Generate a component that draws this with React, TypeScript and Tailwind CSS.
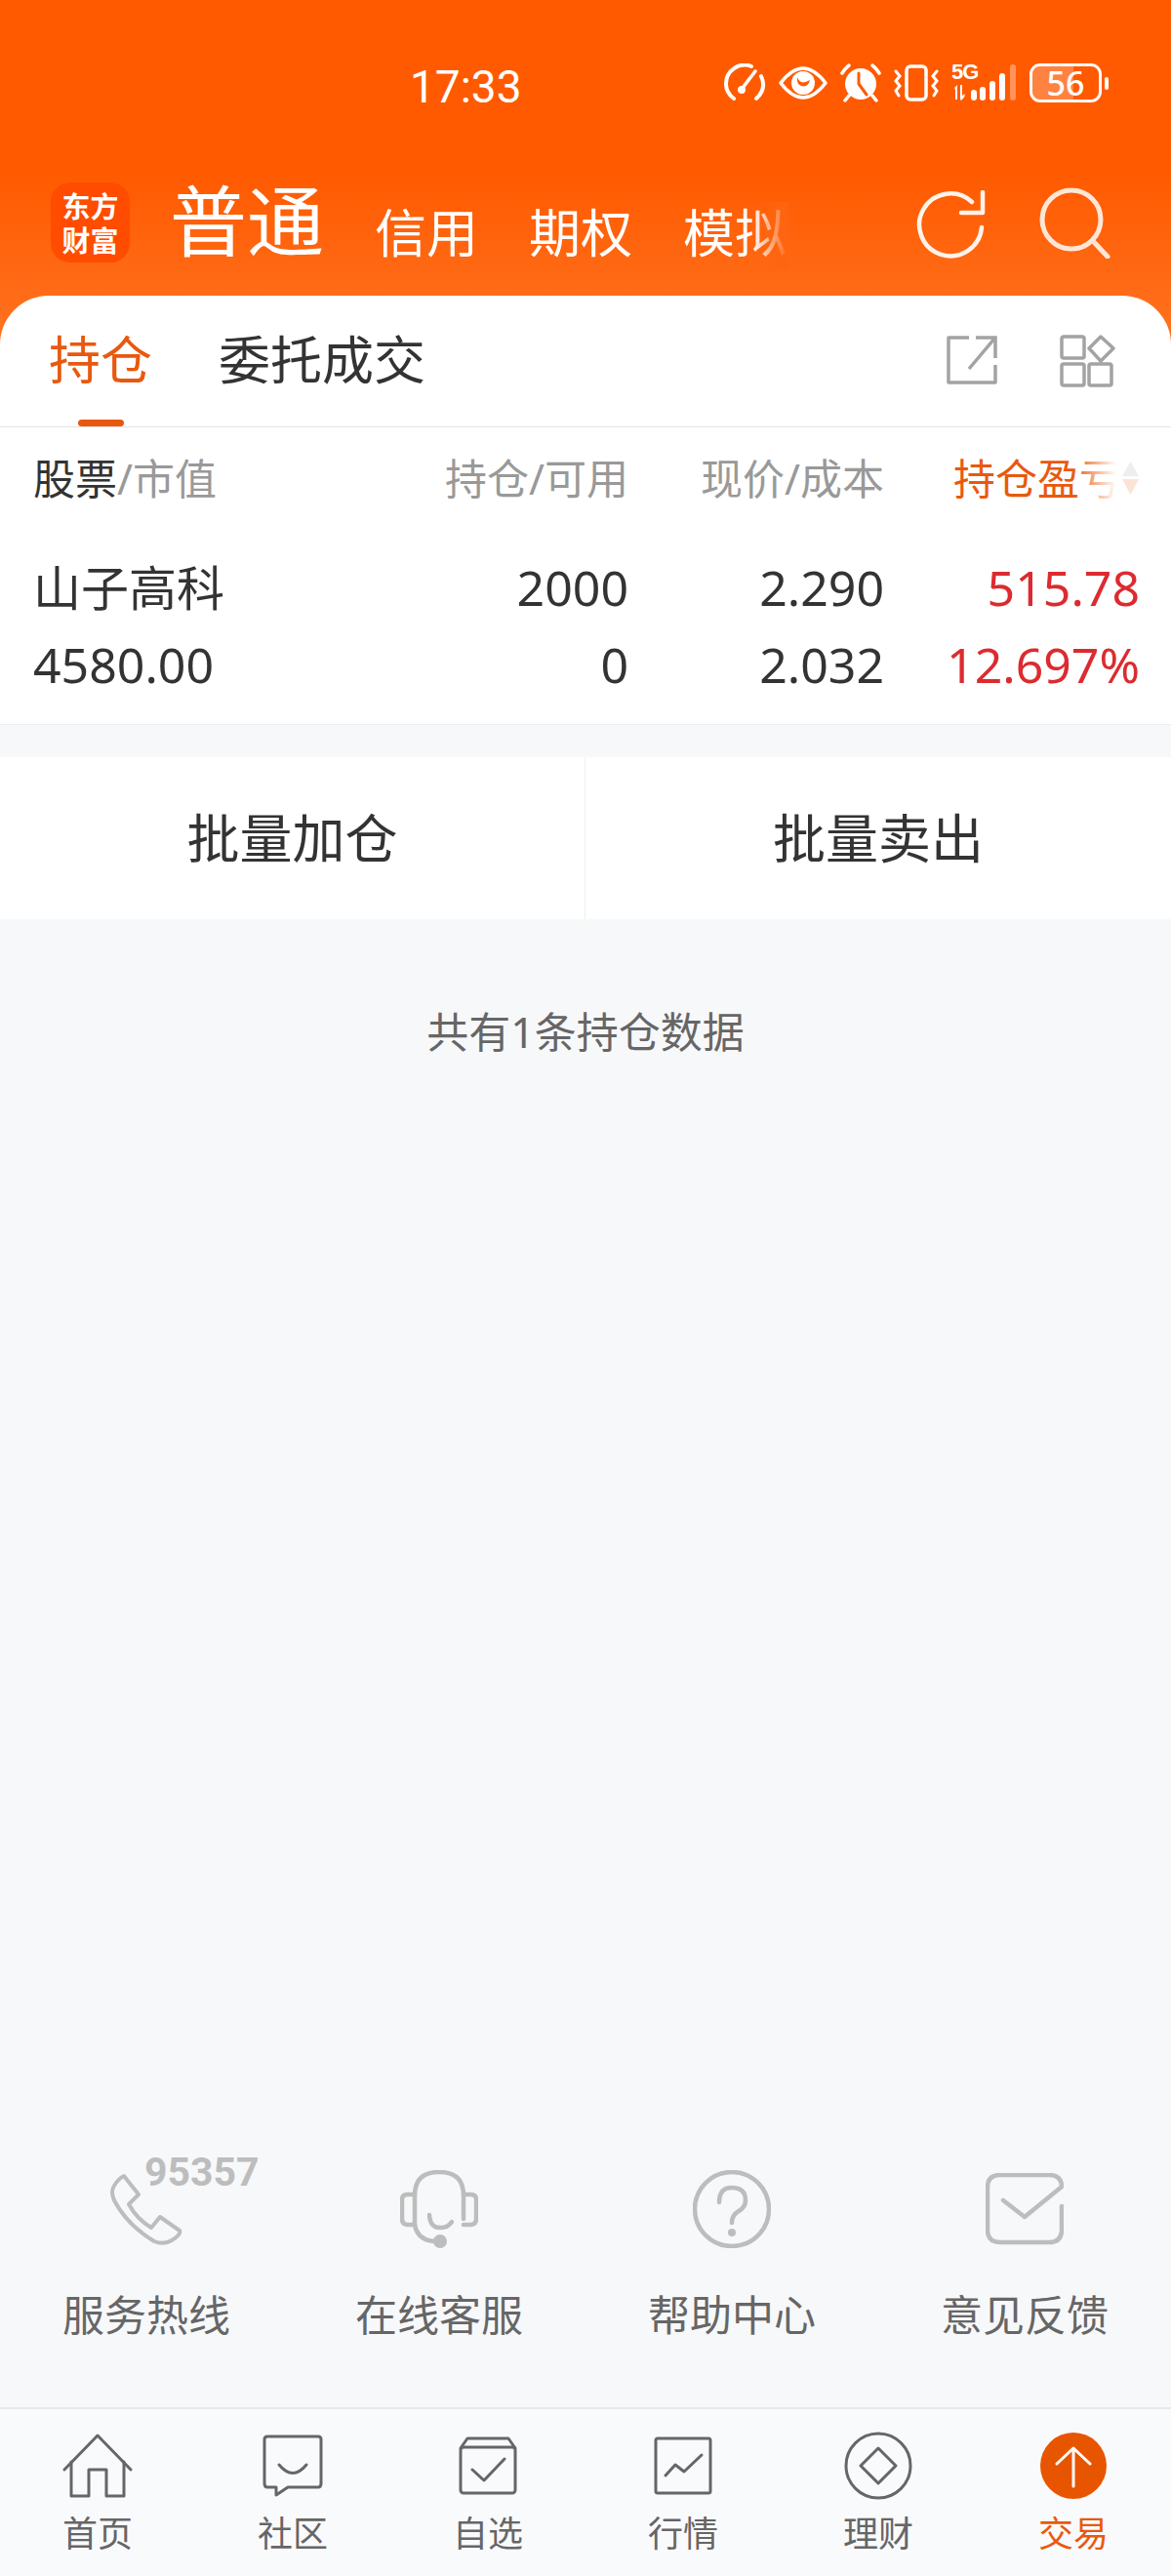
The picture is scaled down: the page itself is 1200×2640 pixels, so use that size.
const FONT = "font-['Noto_Sans','Noto_Sans_CJK_SC',sans-serif]"

function StatusIcons() {
  return (
    <div className="flex items-center">
      <svg width="44" height="40" viewBox="0 0 44 40" fill="none" stroke="#fff" strokeWidth="4" strokeLinecap="round">
        <path d="M10 36 Q2 30 2 21 A19 19 0 0 1 28 3" />
        <path d="M38 13 Q44 26 33 36" />
        <path d="M19 25 L32 8" strokeWidth="3.5" />
        <circle cx="18" cy="27" r="4" fill="#fff" stroke="none" />
      </svg>
      <svg className="ml-[12px]" width="50" height="36" viewBox="0 0 50 36" fill="none">
        <path d="M2 18 Q25 -12 48 18 Q25 48 2 18Z" stroke="#fff" strokeWidth="3.5" strokeLinejoin="round" />
        <circle cx="25" cy="18" r="12" fill="#fff" />
        <path d="M19 12 Q22 21 32 15 Q30 23 23 21 Q18 19 19 12Z" fill="#ff5a00" />
      </svg>
      <svg className="ml-[13px]" width="42" height="40" viewBox="0 0 42 40" fill="none">
        <circle cx="21" cy="21" r="16" fill="#fff" />
        <path d="M19 10 V21 L27 32" stroke="#ff5a00" strokeWidth="3" strokeLinecap="round" strokeLinejoin="round" />
        <path d="M2 10 Q5 5 9 2 M33 2 Q37 5 40 10 M9 33 L5 38 M33 33 L37 38" stroke="#fff" strokeWidth="3.5" strokeLinecap="round" />
      </svg>
      <svg className="ml-[13px]" width="46" height="38" viewBox="0 0 46 38" fill="none" stroke="#fff" strokeLinecap="round">
        <rect x="13" y="2" width="20" height="34" rx="4" strokeWidth="3.5" />
        <path d="M2 7 L6 12 L2 17 L6 22 L2 27 L5 32" strokeWidth="3" />
        <path d="M44 7 L40 12 L44 17 L40 22 L44 27 L41 32" strokeWidth="3" />
      </svg>
      <div className="relative ml-[13px] w-[66px] h-[38px]">
        <span className="absolute left-0 top-[-2px] text-[22px] leading-[20px] font-bold text-white font-['Liberation_Sans',sans-serif] tracking-[-1px]">5G</span>
        <svg className="absolute left-0 top-0" width="66" height="38" viewBox="0 0 66 38" fill="#fff">
          <path d="M3 24 L6 21 V36 H4 V26 Z M9 21 H11 V32 L13.5 30 V33 L10 37 L9 36 Z" />
          <rect x="20" y="26" width="6" height="11" rx="3" />
          <rect x="29" y="23" width="6" height="14" rx="3" />
          <rect x="39" y="17" width="6" height="20" rx="3" />
          <rect x="49" y="9" width="6" height="28" rx="3" />
          <rect x="60" y="0" width="6" height="37" rx="3" fill="#ffffff" fillOpacity="0.35" />
        </svg>
      </div>
      <div className="relative ml-[14px] w-[74px] h-[40px] rounded-[11px] border-[3px] border-white flex items-center justify-center">
        <div className="absolute left-0 top-0 bottom-0 w-[42px] rounded-l-[8px] bg-white/25" />
        <span className={`relative text-[34px] leading-none font-medium text-white ${FONT}`}>56</span>
      </div>
      <div className="ml-[3px] w-[4px] h-[13px] rounded-full bg-white" />
    </div>
  )
}

function TabActions() {
  return (
    <div className="flex items-start mt-[40px] mr-[56px]">
      <svg width="54" height="52" viewBox="0 0 54 52" fill="none" stroke="#a3a3a3" strokeWidth="3.5">
        <path d="M24 3 H3 V49 H51 V31" strokeLinejoin="round" />
        <path d="M24 35 L50 4 M31 3 H51 V24" />
      </svg>
      <svg className="ml-[63px]" width="58" height="54" viewBox="0 0 58 54" fill="none" stroke="#a3a3a3" strokeWidth="3.5" strokeLinejoin="round">
        <rect x="2" y="2" width="23" height="22" rx="2" />
        <rect x="2" y="30" width="23" height="22" rx="2" />
        <rect x="30" y="30" width="23" height="22" rx="2" />
        <path d="M42 2 L55 14 L42 27 L30 14 Z" />
      </svg>
    </div>
  )
}

function Header() {
  return (
    <div className="bg-[linear-gradient(180deg,#ff5a00_0%,#ff5a00_40%,#ff7322_82%,#ff7322_100%)] h-[437px] overflow-hidden">
      <div className="h-[187px] pt-[65px] pl-[420px] pr-[64px] flex justify-between items-start">
        <span className="text-[46px] leading-[48px] text-white font-['Roboto',sans-serif]">17:33</span>
        <StatusIcons />
      </div>
      <div className="relative h-[116px] pl-[52px] flex items-start">
        <div className="w-[81px] h-[82px] rounded-[20px] bg-[#ff4c00] flex flex-col items-center justify-center gap-[6px] text-white text-[29px] leading-[29px] font-bold font-['Noto_Sans_CJK_SC',sans-serif]">
          <span>东方</span>
          <span>财富</span>
        </div>
        <span className={`ml-[41px] mt-[-2px] text-[79px] leading-[84px] text-white ${FONT}`}>普通</span>
        <div className={`ml-[52px] mt-[26px] flex gap-[52px] text-[53px] leading-[52px] text-white ${FONT}`}>
          <span>信用</span>
          <span>期权</span>
          <span>模拟</span>
        </div>
        <div className="absolute left-[770px] top-[20px] w-[38px] h-[70px] bg-[linear-gradient(90deg,rgba(255,100,16,0)_0%,#ff6510_100%)]" />
        <svg className="absolute left-[938px] top-[8px]" width="72" height="72" viewBox="0 0 72 72" fill="none" stroke="#fff3ea" strokeWidth="4.5" strokeLinecap="round" strokeLinejoin="round">
          <path d="M68 38 A32 32 0 1 1 58 12" />
          <path d="M69 2 V23 H47" />
        </svg>
        <svg className="absolute left-[1064px] top-[4px]" width="74" height="74" viewBox="0 0 74 74" fill="none" stroke="#ffe6d6" strokeWidth="5" strokeLinecap="round">
          <circle cx="34" cy="34" r="30" />
          <path d="M56 56 L71 72" />
        </svg>
      </div>
      <div className="h-[134px] bg-white rounded-t-[50px] pl-[50px] flex items-start">
        <div className="relative h-[134px] w-[106px]">
          <span className={`block mt-[40px] text-[53px] leading-[52px] whitespace-nowrap text-[#e8590f] ${FONT}`}>持仓</span>
          <div className="absolute left-[30px] bottom-0 w-[47px] h-[7px] rounded-full bg-[#e8590f]" />
        </div>
        <span className={`ml-[68px] mt-[40px] text-[53px] leading-[52px] whitespace-nowrap text-[#333] ${FONT}`}>委托成交</span>
        <div className="ml-auto">
          <TabActions />
        </div>
      </div>
    </div>
  )
}

function HoldingTable() {
  return (
    <div className={`bg-white border-t border-b border-t-[#e5e5e5] border-b-[#eeeeee] h-[306px] pl-[34px] ${FONT}`}>
      <div className="grid grid-cols-[347px_263px_262px_262px] h-[106px] items-center text-[43px] leading-none text-[#999]">
        <div className="mt-[-1px]">
          <span className="text-[#333]">股票</span>/市值
        </div>
        <div className="text-right mt-[-1px]">持仓/可用</div>
        <div className="text-right mt-[-1px]">现价/成本</div>
        <div className="relative mt-[-1px] h-[44px] overflow-hidden">
          <span className="absolute right-[19px] text-[#e8590f] whitespace-nowrap">持仓盈亏</span>
          <div className="absolute right-[19px] top-0 w-[50px] h-[44px] bg-[linear-gradient(90deg,rgba(255,255,255,0)_0%,#ffffff_90%)]" />
          <svg className="absolute right-0 top-0" width="19" height="42" viewBox="0 0 19 42">
            <path d="M9.5 4 L18 19 H1 Z" fill="#eeeeee" />
            <path d="M1 22 H18 L9.5 38 Z" fill="#fde3d6" />
          </svg>
        </div>
      </div>
      <div className="grid grid-cols-[347px_263px_262px_262px] grid-rows-[48px_48px] gap-y-[31px] mt-[34px] text-[50px] leading-[48px] text-[#333]">
        <div className="text-[49px]">山子高科</div>
        <div className="text-right">2000</div>
        <div className="text-right">2.290</div>
        <div className="text-right text-[#dc2b30]">515.78</div>
        <div>4580.00</div>
        <div className="text-right">0</div>
        <div className="text-right">2.032</div>
        <div className="text-right text-[#dc2b30]">12.697%</div>
      </div>
    </div>
  )
}

function PhoneIcon() {
  return (
    <svg width="74" height="74" viewBox="-1 -1 74 74" fill="none" stroke="#bdbdbd" strokeWidth="4" strokeLinejoin="round">
      <path d="M13 2 L28 21 L18 31 Q26 46 41 55 L50 44 L70 58 Q72 62 62 68 Q54 73 44 69 Q16 52 3 27 Q-1 18 3 12 Q8 4 13 2 Z" />
    </svg>
  )
}

function HeadsetIcon() {
  return (
    <svg width="80" height="80" viewBox="0 0 80 80" fill="none" stroke="#bdbdbd" strokeWidth="4.5" strokeLinecap="round">
      <path d="M15 56 V26 Q15 2 40 2 Q65 2 65 26 V50" />
      <path d="M15 25 H8 Q2 25 2 30 V50 Q2 56 8 56 H15" />
      <path d="M65 25 H72 Q78 25 78 30 V50 Q78 56 72 56 H65" />
      <path d="M15 56 Q18 73 38 73" />
      <path d="M30 46 Q31 60 42 59 Q49 59 53 53" />
      <circle cx="41" cy="73" r="7" fill="#bdbdbd" stroke="none" />
    </svg>
  )
}

function QuestionIcon() {
  return (
    <svg width="80" height="80" viewBox="0 0 80 80" fill="none" stroke="#bdbdbd" strokeWidth="4.5" strokeLinecap="round">
      <circle cx="40" cy="40" r="38" />
      <path d="M27 33 Q27 18 40 18 Q54 18 54 31 Q54 38 47 42 Q40 46 40 54" />
      <circle cx="40" cy="64" r="4" fill="#bdbdbd" stroke="none" />
    </svg>
  )
}

function MailIcon() {
  return (
    <svg width="80" height="74" viewBox="0 0 80 74" fill="none" stroke="#bdbdbd" strokeWidth="4.5" strokeLinecap="round" strokeLinejoin="round">
      <path d="M78 34 V58 Q78 71 65 71 H15 Q2 71 2 58 V15 Q2 2 15 2 H65 Q78 2 78 14 L40 45 L18 28" />
    </svg>
  )
}

const services = [
  { label: '服务热线', icon: <PhoneIcon /> },
  { label: '在线客服', icon: <HeadsetIcon /> },
  { label: '帮助中心', icon: <QuestionIcon /> },
  { label: '意见反馈', icon: <MailIcon /> },
]

function ServiceRow() {
  return (
    <div className={`mt-auto grid grid-cols-4 pb-[73px] ${FONT}`}>
      {services.map((s, i) => (
        <div key={s.label} className="relative flex flex-col items-center">
          <div className="h-[80px] flex items-center justify-center">{s.icon}</div>
          {i === 0 && (
            <span className="absolute left-[148px] top-[-18px] text-[41px] leading-[40px] font-bold text-[#bdbdbd] font-['Roboto',sans-serif]">95357</span>
          )}
          <span className="mt-[48px] text-[43px] leading-[42px] text-[#666]">{s.label}</span>
        </div>
      ))}
    </div>
  )
}

const navStroke = { fill: 'none', stroke: '#666', strokeWidth: 3, strokeLinejoin: 'round' as const, strokeLinecap: 'round' as const }

const navItems = [
  {
    label: '首页',
    icon: (
      <svg width="72" height="66" viewBox="0 0 72 66" {...navStroke}>
        <path d="M2 37 L36 2 L70 37" />
        <path d="M9 29 V64 H27 V37 H45 V64 H63 V29" />
      </svg>
    ),
  },
  {
    label: '社区',
    icon: (
      <svg width="62" height="64" viewBox="0 0 62 64" {...navStroke}>
        <path d="M5 2 H57 Q60 2 60 5 V50 Q60 54 57 54 H26 L14 62 V54 H5 Q2 54 2 50 V5 Q2 2 5 2Z" />
        <path d="M17 31 Q31 48 45 31" />
      </svg>
    ),
  },
  {
    label: '自选',
    icon: (
      <svg width="60" height="60" viewBox="0 0 60 60" {...navStroke}>
        <path d="M2 12 L9 2 H51 L58 12" />
        <rect x="2" y="11" width="56" height="47" rx="3" />
        <path d="M14 34 L26 45 L47 23" />
      </svg>
    ),
  },
  {
    label: '行情',
    icon: (
      <svg width="60" height="60" viewBox="0 0 60 60" {...navStroke}>
        <rect x="2" y="2" width="56" height="56" rx="2" />
        <path d="M12 40 L22 29 L31 36 L49 19" />
      </svg>
    ),
  },
  {
    label: '理财',
    icon: (
      <svg width="70" height="70" viewBox="0 0 70 70" {...navStroke}>
        <circle cx="35" cy="35" r="33" />
        <path d="M35 17 L53 35 L35 53 L17 35 Z" />
      </svg>
    ),
  },
  {
    label: '交易',
    active: true,
    icon: (
      <svg width="68" height="68" viewBox="0 0 68 68" fill="none">
        <circle cx="34" cy="34" r="34" fill="#e85500" />
        <path d="M34 16 V55 M17 32 L34 16 L51 32" stroke="#fff" strokeWidth="3" strokeLinecap="round" strokeLinejoin="round" />
      </svg>
    ),
  },
]

function BottomNav() {
  return (
    <div className={`h-[173px] border-t-2 border-[#e8e9eb] bg-[#f9fafc] grid grid-cols-6 pt-[23px] ${FONT}`}>
      {navItems.map(item => (
        <div key={item.label} className="flex flex-col items-center">
          <div className="h-[70px] flex items-center justify-center">{item.icon}</div>
          <span className={`mt-[18px] text-[36px] leading-[34px] ${item.active ? 'text-[#e8590f]' : 'text-[#666]'}`}>{item.label}</span>
        </div>
      ))}
    </div>
  )
}

export default function App() {
  return (
    <div className={`w-[1200px] h-[2640px] flex flex-col bg-[#f7f8fa] overflow-hidden ${FONT}`}>
      <Header />
      <HoldingTable />
      <div className="mt-[33px] h-[166px] bg-white grid grid-cols-2">
        <div className="flex items-center justify-center border-r border-[#f0f0f0] text-[54px] text-[#333]">批量加仓</div>
        <div className="flex items-center justify-center text-[54px] text-[#333]">批量卖出</div>
      </div>
      <div className="mt-[94px] text-center text-[43px] leading-[44px] text-[#666]">共有1条持仓数据</div>
      <ServiceRow />
      <BottomNav />
    </div>
  )
}
